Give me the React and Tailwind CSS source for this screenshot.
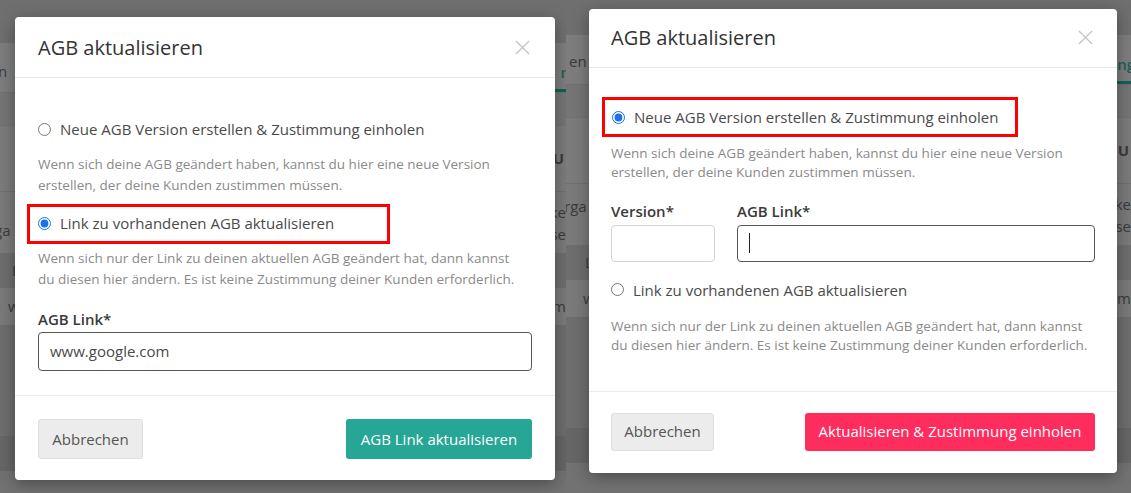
import React from 'react';

const font = { fontFamily: '"Open Sans", "Noto Sans", sans-serif' };

function CloseIcon({ className }) {
  return (
    <svg viewBox="0 0 16 16" className={className} fill="none" stroke="currentColor" strokeWidth="1.4">
      <path d="M1 1 L15 15 M15 1 L1 15" />
    </svg>
  );
}

// dimmed app page behind the dialog
function Backdrop({ right = false }) {
  return (
    <div className={`absolute left-0 right-0 bottom-0 flex flex-col bg-[#7a7a7a] text-[15px] text-[#3a3a3a] ${right ? '-top-[8px]' : 'top-0'}`}>
      <div className="h-[43px] bg-[#6f6f6f] shrink-0" />
      <div className="h-[50px] bg-[#7d7d7d] border-b border-[#707070] flex items-center justify-between shrink-0">
        <span className={right ? 'ml-[3px] pt-1' : '-ml-[2px] pt-2'}>{right ? 'en' : 'n'}</span>
        <div className="flex flex-col items-end w-[26px] h-full justify-end">
          <span className="font-semibold text-[#1d5e55] pb-[6px] -mr-[4px]">{right ? 'ng' : 'n'}</span>
          <div className="h-[3px] w-[26px] bg-[#136056]" />
        </div>
      </div>
      <div className="h-[32px] bg-[#757575] shrink-0" />
      <div className="h-[66px] bg-[#7b7b7b] border-t border-[#717171] flex items-center justify-end pr-[2px] font-bold shrink-0">U</div>
      <div className="h-[62px] bg-[#7a7a7a] border-t border-[#717171] flex items-center justify-between shrink-0">
        <span className={right ? '-ml-[2px] pb-4' : '-ml-[6px] pt-4'}>{right ? 'rga' : 'ga'}</span>
        <span className="leading-[22px] text-right">ke<br />se</span>
      </div>
      <div className={`h-[35px] bg-[#6e6e6e] flex items-center shrink-0 ${right ? 'pl-[19px]' : 'pl-[12px]'}`}>L</div>
      <div className={`h-[38px] bg-[#7a7a7a] border-b border-[#6c6c6c] flex items-center justify-between shrink-0 ${right ? 'pl-[17px]' : 'pl-[8px]'}`}>
        <span>w</span>
        <span>m</span>
      </div>
      <div className="h-[110px] bg-[#6e6e6e] shrink-0" />
      <div className="h-[35px] bg-[#666666] shrink-0" />
      <div className="flex-1 bg-[#727272]" />
    </div>
  );
}

function Radio({ checked, label }) {
  return (
    <label className="flex items-center gap-[9px] text-[15px] text-[#4a4a4a]">
      <input type="radio" readOnly checked={checked} className="w-[13px] h-[13px] accent-[#1a73e8]" />
      <span>{label}</span>
    </label>
  );
}

function Desc({ children, className = '' }) {
  return <p className={`text-[13.5px] text-[#8a8a8a] ${className}`}>{children}</p>;
}

function LeftDialog() {
  return (
    <div className="absolute left-[15px] top-[17px] w-[540px] h-[463px] bg-white rounded-[4px] shadow-[0_4px_16px_rgba(0,0,0,0.35)] flex flex-col">
      <div className="h-[61px] border-b border-[#e6e6e6] flex items-center justify-between px-[23px] shrink-0">
        <h2 className="text-[20px] text-[#333] pt-[2px]">AGB aktualisieren</h2>
        <CloseIcon className="w-[15px] h-[15px] text-[#c4c4c4] mr-[2px] mt-[1px]" />
      </div>
      <div className="flex-1 px-[23px] pt-[40px]">
        <Radio label="Neue AGB Version erstellen & Zustimmung einholen" />
        <Desc className="mt-[13px] leading-[21px]">
          Wenn sich deine AGB geändert haben, kannst du hier eine neue Version<br />erstellen, der deine Kunden zustimmen müssen.
        </Desc>
        <div className="-ml-[11px] mt-[8px] w-[363px] h-[40px] border-[3px] border-[#ff0000] pl-[8px] flex items-center">
          <Radio checked label="Link zu vorhandenen AGB aktualisieren" />
        </div>
        <Desc className="mt-[4px] leading-[21px]">
          Wenn sich nur der Link zu deinen aktuellen AGB geändert hat, dann kannst<br />du diesen hier ändern. Es ist keine Zustimmung deiner Kunden erforderlich.
        </Desc>
        <div className="mt-[18px] text-[15px] font-semibold text-[#3a3a3a]">AGB Link*</div>
        <div className="mt-[2px] h-[39px] border border-[#555] rounded-[4px] flex items-center px-[11px] text-[15px] text-[#4a4a4a]">
          www.google.com
        </div>
      </div>
      <div className="h-[85px] border-t border-[#ececec] flex items-center justify-between px-[23px] pt-[2px] shrink-0">
        <button className="h-[40px] w-[105px] bg-[#ececec] border border-[#dedede] rounded-[3px] text-[15px] text-[#555]">Abbrechen</button>
        <button className="h-[40px] w-[186px] bg-[#26a695] rounded-[3px] text-[15px] text-white">AGB Link aktualisieren</button>
      </div>
    </div>
  );
}

function RightDialog() {
  return (
    <div className="absolute left-[23px] top-[9px] w-[528px] h-[464px] bg-white rounded-[4px] shadow-[0_4px_16px_rgba(0,0,0,0.35)] flex flex-col">
      <div className="h-[59px] border-b border-[#e6e6e6] flex items-center justify-between px-[22px] shrink-0">
        <h2 className="text-[20px] text-[#333] -mt-[1px]">AGB aktualisieren</h2>
        <CloseIcon className="w-[15px] h-[15px] text-[#c4c4c4] mr-[2px] -mt-[1px]" />
      </div>
      <div className="flex-1 px-[22px] pt-[29px]">
        <div className="-ml-[9px] w-[416px] h-[40px] border-[3px] border-[#ff0000] pl-[7px] flex items-center">
          <Radio checked label="Neue AGB Version erstellen & Zustimmung einholen" />
        </div>
        <Desc className="mt-[7px] leading-[19px]">
          Wenn sich deine AGB geändert haben, kannst du hier eine neue Version<br />erstellen, der deine Kunden zustimmen müssen.
        </Desc>
        <div className="mt-[18px] flex gap-[22px]">
          <div className="w-[104px]">
            <div className="text-[15px] font-semibold text-[#3a3a3a]">Version*</div>
            <div className="mt-[2px] h-[37px] border border-[#d4d4d4] rounded-[4px]" />
          </div>
          <div className="flex-1">
            <div className="text-[15px] font-semibold text-[#3a3a3a]">AGB Link*</div>
            <div className="mt-[2px] h-[37px] border border-[#555] rounded-[4px] flex items-center px-[11px]">
              <div className="w-[1px] h-[20px] bg-[#222]" />
            </div>
          </div>
        </div>
        <div className="mt-[17px]">
          <Radio label="Link zu vorhandenen AGB aktualisieren" />
        </div>
        <Desc className="mt-[16px] leading-[19px]">
          Wenn sich nur der Link zu deinen aktuellen AGB geändert hat, dann kannst<br />du diesen hier ändern. Es ist keine Zustimmung deiner Kunden erforderlich.
        </Desc>
      </div>
      <div className="h-[82px] border-t border-[#ececec] flex items-center justify-between px-[22px] pb-[2px] shrink-0">
        <button className="h-[38px] w-[103px] bg-[#ececec] border border-[#dedede] rounded-[3px] text-[15px] text-[#555]">Abbrechen</button>
        <button className="h-[38px] w-[290px] bg-[#ff2c5e] rounded-[3px] text-[15px] text-white">Aktualisieren &amp; Zustimmung einholen</button>
      </div>
    </div>
  );
}

export default function App() {
  return (
    <div className="flex w-[1131px] h-[493px] overflow-hidden" style={font}>
      <div className="relative w-[566px] h-full overflow-hidden">
        <Backdrop />
        <LeftDialog />
      </div>
      <div className="relative w-[565px] h-full overflow-hidden">
        <Backdrop right />
        <RightDialog />
      </div>
    </div>
  );
}
